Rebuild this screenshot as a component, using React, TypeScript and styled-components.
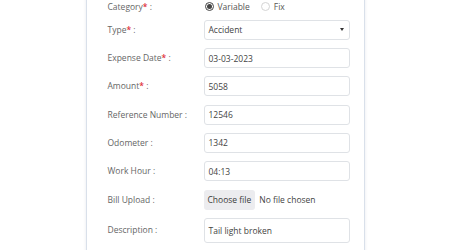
import React from "react"
import styled, { createGlobalStyle } from "styled-components"

const GlobalStyle = createGlobalStyle`
  body {
    margin: 0;
    background: #ffffff;
    font-family: "Open Sans", "Liberation Sans", sans-serif;
    overflow: hidden;
  }
`

const Card = styled.div`
  width: 279px;
  margin: -20px auto 0;
  padding: 19.5px 17px 12px 21px;
  box-sizing: border-box;
  border: 1px solid #d9e0ea;
  box-shadow: 0 0 3px rgba(60, 80, 120, 0.12);
  background: #fff;
`

const Form = styled.div`
  display: grid;
  grid-template-columns: 96px 146px;
  row-gap: 8.3px;
  align-items: center;
`

const Label = styled.div<{ $short?: boolean }>`
  font-size: 8.5px;
  color: #666;
  line-height: ${(p) => (p.$short ? "11px" : "20px")};
  white-space: nowrap;

  b {
    color: #e0303a;
    font-weight: 600;
  }
`

const RadioGroup = styled.div`
  display: flex;
  align-items: center;
  height: 11px;
  padding-left: 1px;
  font-size: 8.5px;
  color: #555;
`

const RadioItem = styled.label`
  display: flex;
  align-items: center;
  gap: 4px;
  margin-right: 11px;
`

const RadioDot = styled.span<{ $checked?: boolean }>`
  width: 9px;
  height: 9px;
  box-sizing: border-box;
  border-radius: 50%;
  border: 1px solid ${(p) => (p.$checked ? "#444" : "#d4d4d4")};
  display: flex;
  align-items: center;
  justify-content: center;

  &::after {
    content: "";
    width: 5px;
    height: 5px;
    border-radius: 50%;
    background: ${(p) => (p.$checked ? "#444" : "transparent")};
  }
`

const Field = styled.div<{ $tall?: boolean }>`
  height: ${(p) => (p.$tall ? "25px" : "20px")};
  box-sizing: border-box;
  border: 1px solid #dfe2e6;
  border-radius: 3px;
  padding: 0 4px;
  display: flex;
  align-items: center;
  justify-content: space-between;
  font-size: 8.5px;
  color: #444;
  background: #fff;
`

const Caret = styled.span`
  width: 0;
  height: 0;
  margin-right: 1px;
  border-left: 2.5px solid transparent;
  border-right: 2.5px solid transparent;
  border-top: 3.5px solid #333;
`

const FileRow = styled.div`
  display: flex;
  align-items: center;
  gap: 4px;
  font-size: 8.5px;
  color: #444;
`

const FileButton = styled.span`
  height: 20px;
  padding: 0 4px;
  display: flex;
  align-items: center;
  border-radius: 3px;
  background: #ececef;
  color: #3b3b3b;
`

const RequiredLabel = ({ text }: { text: string }) => (
  <Label>
    {text}
    <b>*</b> :
  </Label>
)

const fields = [
  { label: "Reference Number :", value: "12546" },
  { label: "Odometer :", value: "1342" },
  { label: "Work Hour :", value: "04:13" },
]

const App = () => {
  return (
    <>
      <GlobalStyle />
      <Card>
        <Form>
          <Label $short>
            Category<b>*</b> :
          </Label>
          <RadioGroup>
            <RadioItem>
              <RadioDot $checked />
              Variable
            </RadioItem>
            <RadioItem>
              <RadioDot />
              Fix
            </RadioItem>
          </RadioGroup>

          <RequiredLabel text="Type" />
          <Field>
            Accident
            <Caret />
          </Field>

          <RequiredLabel text="Expense Date" />
          <Field>03-03-2023</Field>

          <RequiredLabel text="Amount" />
          <Field>5058</Field>

          {fields.map((f) => (
            <React.Fragment key={f.label}>
              <Label>{f.label}</Label>
              <Field>{f.value}</Field>
            </React.Fragment>
          ))}

          <Label>Bill Upload :</Label>
          <FileRow>
            <FileButton>Choose file</FileButton>
            No file chosen
          </FileRow>

          <Label>Description :</Label>
          <Field $tall>Tail light broken</Field>
        </Form>
      </Card>
    </>
  )
}

export default App
